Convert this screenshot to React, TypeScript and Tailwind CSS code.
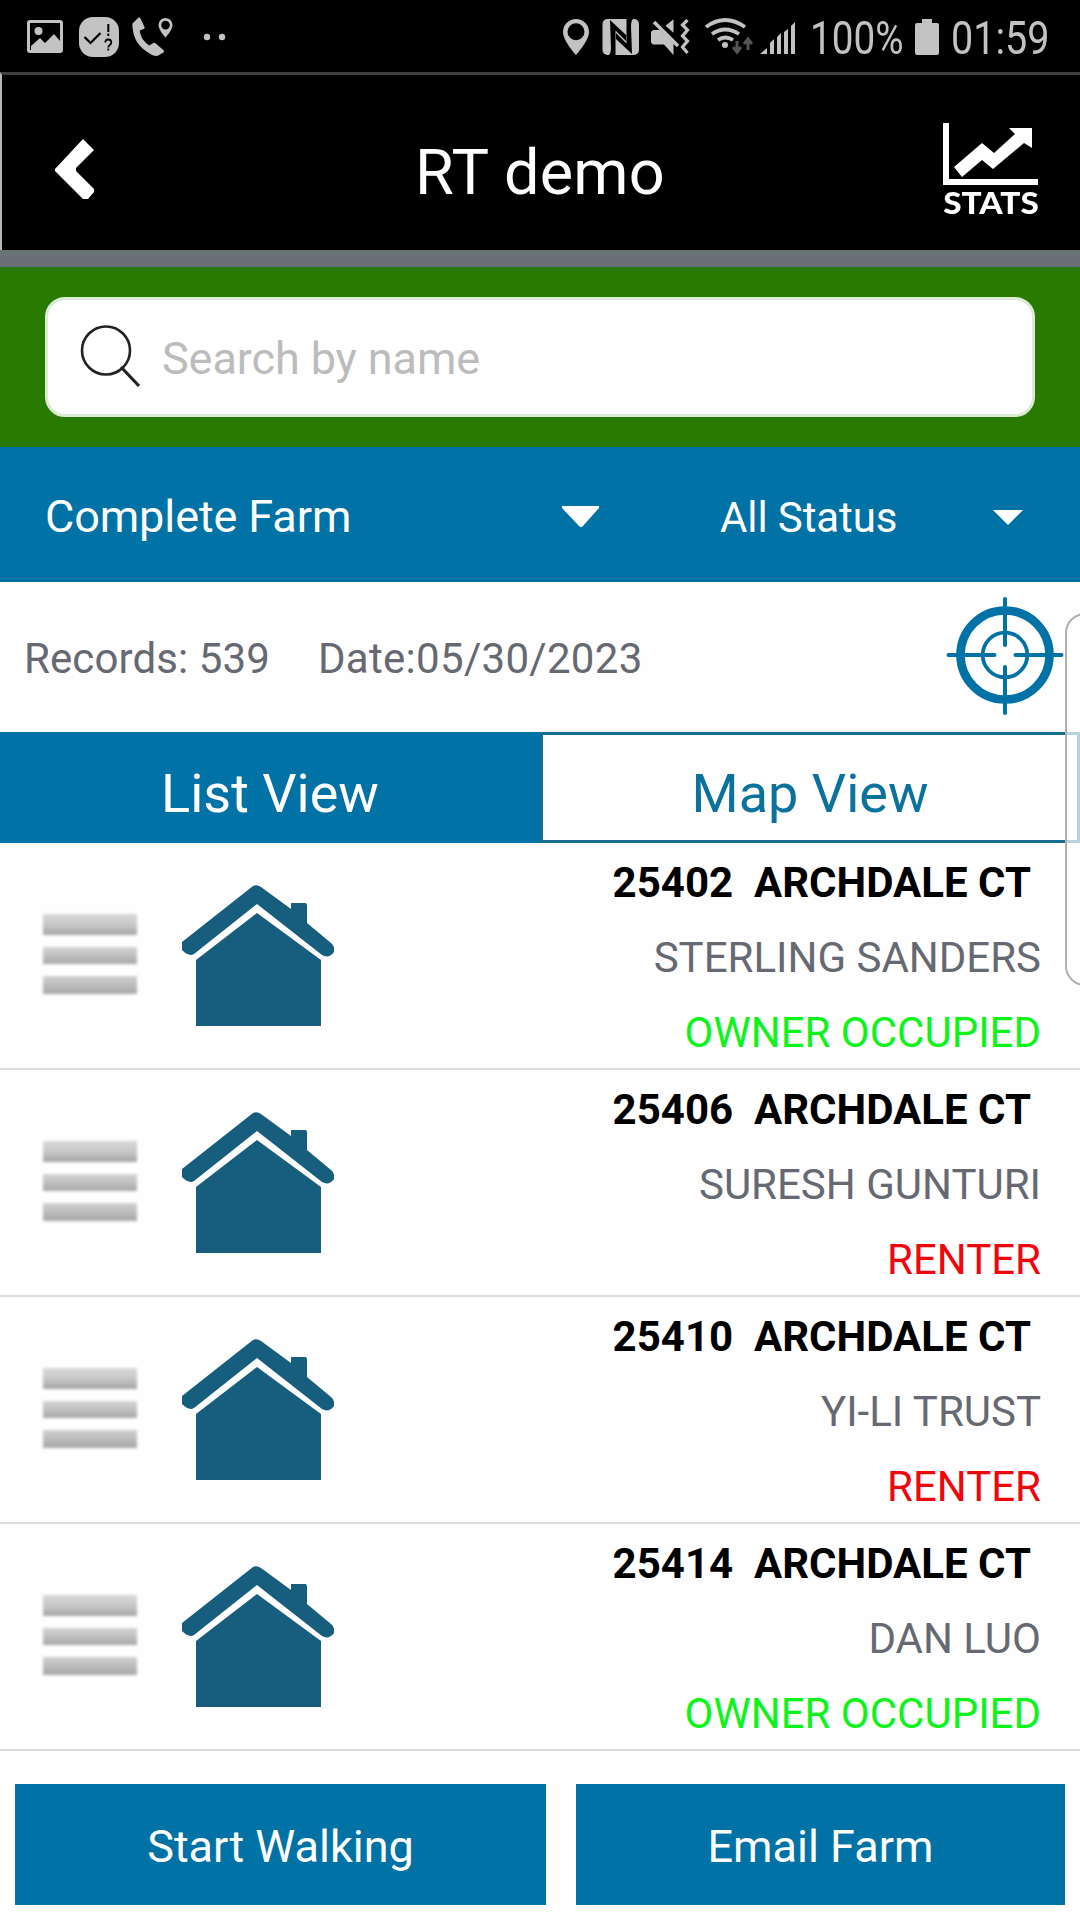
import React from "react";

const rows = [
  { no: "25402", name: "STERLING SANDERS", owner: true },
  { no: "25406", name: "SURESH GUNTURI", owner: false },
  { no: "25410", name: "YI-LI TRUST", owner: false },
  { no: "25414", name: "DAN LUO", owner: true },
];

function StatusBar() {
  return (
    <div className="flex h-[72px] shrink-0 items-start bg-black text-[#c2c2c2]">
      <svg width="240" height="72" viewBox="0 0 240 72" fill="currentColor">
        <rect x="28.5" y="21.500" width="33" height="30" rx="1.5" fill="none" stroke="currentColor" strokeWidth="3" />
        <circle cx="38.500" cy="31" r="4" />
        <path d="M31 46l9-8 5 5 9-9 6 7v11H31z" />
        <rect x="79" y="17" width="40" height="40" rx="14" />
        <path d="M84.500 37l6 6 10-10" fill="none" stroke="#000" strokeWidth="2.200" />
        <path d="M108.300 24v8M108.300 33.500v2.500" stroke="#000" strokeWidth="2" />
        <path d="M105.300 42.500c0-4 6-4 6 0 0 2.500-3 2.500-3 5M108.300 48.500v2" fill="none" stroke="#000" strokeWidth="1.800" />
        <path d="M133 23l5-5c1-.8 2-.5 2.500.5l4 8.500c.3 1 0 1.500-.8 2l-4 1.500c1 7 4 11 9.500 15l4-2.500c.8-.5 1.500-.5 2.200.2l8 6.800c.8.8.8 1.800 0 2.500l-5 3c-2 1-5 .5-8-1.500-12-7-17-15-18-28-.1-1.300 0-2.300.6-3z" />
        <path fillRule="evenodd" d="M165.500 18a7 7 0 0 0-7 7c0 5 7 12.500 7 12.500s7-7.500 7-12.500a7 7 0 0 0-7-7zm0 2.800a4.300 4.300 0 1 1 0 8.600 4.300 4.300 0 0 1 0-8.600z" />
        <circle cx="207" cy="37" r="3.200" />
        <circle cx="222" cy="37" r="3.200" />
      </svg>
      <svg className="ml-auto" width="246" height="72" viewBox="558 0 246 72" fill="currentColor">
        <path fillRule="evenodd" d="M576 19a13 13 0 0 0-13 13c0 9 13 23 13 23s13-14 13-23a13 13 0 0 0-13-13zm0 4.300a8.500 8.500 0 1 1 0 17 8.500 8.500 0 0 1 0-17z" />
        <rect x="602.500" y="19" width="36.500" height="36" rx="5" />
        <path d="M610 20l16 15v6l-10.500-10.500V55H609q2-2 2-7zM632 54l-16-15v-6l10.500 10.500V19H633q-2 2-2 7z" fill="#000" />
        <path d="M653 30h7l13.500 13.500V55l-9.500-10.500h-11l-2-2V32zM673.500 19.300v13.500l-8-7z" />
        <path d="M654 22l24 24" stroke="currentColor" strokeWidth="3.600" />
        <path d="M687.500 20l-5 5 5 5-5 6 5 5-5 6 5 6" fill="none" stroke="currentColor" strokeWidth="3.200" />
        <g fill="none" stroke="currentColor" strokeWidth="3.800">
          <path d="M706 27q19-14 39 0M712 34q13-9 27 0M718 40q7-5 15 0" />
        </g>
        <circle cx="725" cy="45" r="3" />
        <path d="M737 41v10m-4-4l4 5 4-5M748 50V39m-4 5l4-5 4 5" fill="none" stroke="#555" strokeWidth="3" />
        <path d="M760 54l7-6v6zM770 54V43l4-4v15zM777 54V37l4-4v21zM784 54V32l4-3v25zM791 54V26l4-4v32z" />
      </svg>
      <span className="mt-[15px] ml-[6px] w-[96px] font-[Roboto] text-[46px] leading-[46px] whitespace-nowrap">
        <span className="inline-block origin-left scale-x-[0.840]">100%</span>
      </span>
      <svg className="ml-[8px]" width="26" height="72" viewBox="0 0 26 72" fill="currentColor">
        <path d="M8 19h10v4h5q2 0 2 2v28q0 2-2 2H3q-2 0-2-2V25q0-2 2-2h5z" />
      </svg>
      <span className="mt-[15px] ml-[11px] w-[129px] font-[Roboto] text-[46px] leading-[46px] whitespace-nowrap">
        <span className="inline-block origin-left scale-x-[0.860]">01:59</span>
      </span>
    </div>
  );
}

function Header() {
  return (
    <header className="flex h-[178px] shrink-0 items-start border-t-[3px] border-l-2 border-t-[#3e3e3e] border-l-[#b5b8b7] bg-black text-white">
      <svg className="mt-[62px] ml-[52px]" width="46" height="64" viewBox="0 0 46 64" fill="currentColor">
        <path d="M29 2l11 11-18 18v3l18 18v3l-6 7h-5L1 34v-2z" />
      </svg>
      <h1 className="mt-[58px] ml-[315px] w-[256px] text-[63px] leading-[80px] tracking-[0.2px] whitespace-nowrap">RT demo</h1>
      <div className="mt-[47px] mr-[41px] ml-auto flex flex-col items-center">
        <svg width="96" height="66" viewBox="0 0 96 66" fill="currentColor">
          <path d="M0 1h6v56h89v6H0z" />
          <path d="M11 45l28-24 12 10 21-19-6-6h23v20l-8-5-31 26-11-9-20 17z" />
        </svg>
        <span className="inline-block scale-x-[1.110] font-[Lato] text-[30px] leading-[28px] font-black">STATS</span>
      </div>
    </header>
  );
}

function Target() {
  return (
    <svg width="120" height="124" viewBox="0 0 120 124" fill="none" stroke="#0072a5" strokeLinecap="round">
      <circle cx="60" cy="61" r="44.500" strokeWidth="8.600" />
      <circle cx="60" cy="61" r="22.300" strokeWidth="3.800" />
      <path d="M60 5v46M60 73v46M3.500 61h46M70.500 61h46" strokeWidth="4" />
    </svg>
  );
}

function Row({ no, name, owner }: { no: string; name: string; owner: boolean }) {
  return (
    <div className="flex h-[227px] shrink-0 border-b-2 border-[#dcdcdc]">
      <div className="mt-[71px] ml-[43px] flex w-[94px] flex-col gap-[12px]">
        <div className="h-[21px] bg-linear-to-b from-[#d8d8d8] via-[#c8c8c8] to-[#a4a4a4] blur-[1.5px]" />
        <div className="h-[17px] bg-linear-to-b from-[#d4d4d4] via-[#c0c0c0] to-[#a6a6a6] blur-[1.5px]" />
        <div className="h-[18px] bg-linear-to-b from-[#d0d0d0] via-[#bcbcbc] to-[#a6a6a6] blur-[1.5px]" />
      </div>
      <svg className="mt-[41px] ml-[45px]" width="152" height="143" viewBox="0 0 152 143" fill="#175d7d">
        <path d="M71 2q4-2 8 1l30 22v-6h15l1 2v18l24 20q4 3 3 9-5 7-12 3L75 20 12 70q-5 3-12-4v-8z" />
        <path d="M14 76L75 29l64 47v66H14z" />
      </svg>
      <div className="ml-auto flex flex-col pt-[2px] pr-[39px] text-right text-[42px] leading-[75px] whitespace-pre">
        <span className="pr-[10px] font-bold text-black">{no + "  ARCHDALE CT"}</span>
        <span className="text-[#666872]">{name}</span>
        {owner ? <span className="text-[#0cf41a]">OWNER OCCUPIED</span> : <span className="text-[#f0050a]">RENTER</span>}
      </div>
    </div>
  );
}

export default function App() {
  return (
    <div className="relative flex h-[1920px] w-[1080px] flex-col overflow-hidden bg-[#fefefe] font-[Roboto]">
      <StatusBar />
      <Header />
      <div className="h-[17px] shrink-0 bg-linear-to-b from-[#697372] to-[#6b6d7a]" />
      <div className="flex h-[180px] shrink-0 bg-[#297a00] px-[45px] pt-[30px]">
        <div className="flex h-[120px] w-full items-center rounded-[20px] border-[3px] border-[#dcebd6] bg-white">
          <svg className="ml-[32px]" width="64" height="66" viewBox="0 0 64 66" fill="none" stroke="#222" strokeWidth="2.600">
            <circle cx="26" cy="26.500" r="24" />
            <path d="M41 43l18 19" strokeWidth="3.200" />
          </svg>
          <span className="ml-[18px] pt-[4px] text-[45px] tracking-[-0.1px] text-[#bcbcbc]">Search by name</span>
        </div>
      </div>
      <div className="flex h-[135px] shrink-0 items-center bg-[#0072a5] text-white">
        <span className="ml-[45px] w-[516px] pt-[4px] text-[45px] tracking-[-0.1px]">Complete Farm</span>
        <svg className="mt-[5px]" width="40" height="24" viewBox="0 0 40 24" fill="currentColor">
          <path d="M1 1h37v2L21 22h-2L1 3z" />
        </svg>
        <span className="ml-[119px] w-[273px] pt-[5px] text-[42px] tracking-[-0.1px]">All Status</span>
        <svg className="mt-[5px]" width="30" height="17" viewBox="0 0 30 17" fill="currentColor">
          <path d="M0 1h30L15 16z" />
        </svg>
      </div>
      <div className="flex h-[150px] shrink-0 items-center text-[42px] text-[#666872]">
        <span className="ml-[24px] w-[294px] pt-[3px] tracking-[0.1px]">Records: 539</span>
        <span className="pt-[3px] tracking-[0.3px]">Date:05/30/2023</span>
        <div className="mr-[15px] mb-[2px] ml-auto">
          <Target />
        </div>
      </div>
      <div className="flex h-[111px] shrink-0 text-[54px] leading-[123px]">
        <div className="w-[540px] bg-[#0072a5] text-center text-white">List View</div>
        <div className="w-[540px] border-[3px] border-[#176d8e] text-center leading-[117px] text-[#0b729d]">Map View</div>
      </div>
      {rows.map((r) => (
        <Row key={r.no} {...r} />
      ))}
      <div className="flex px-[15px] pt-[33px] text-[45px] leading-[125px] text-white">
        <div className="h-[121px] w-[531px] bg-[#0072a5] text-center">Start Walking</div>
        <div className="ml-[30px] h-[121px] w-[489px] bg-[#0072a5] text-center">Email Farm</div>
      </div>
      <div className="absolute top-[613px] left-[1065px] h-[373px] w-[40px] rounded-[22px] border-2 border-[#b0b0b0] bg-white/70" />
    </div>
  );
}
